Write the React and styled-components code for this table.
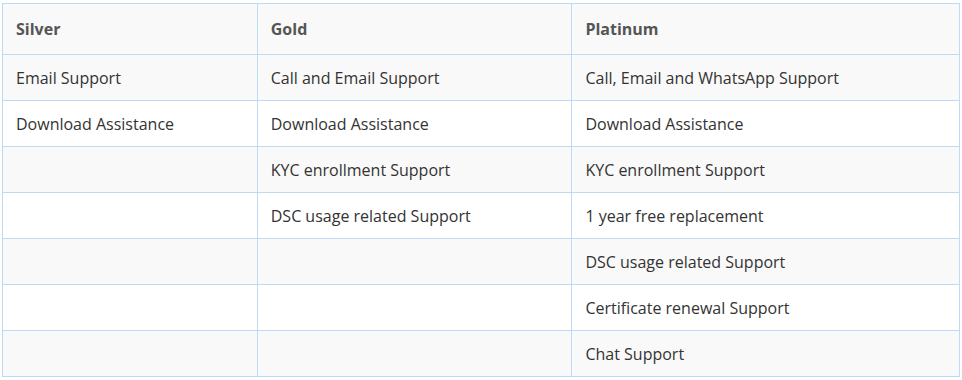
import React from "react";
import styled, { createGlobalStyle } from "styled-components";

const GlobalStyle = createGlobalStyle`
  body {
    margin: 0;
    background: #ffffff;
    font-family: "Open Sans", "Liberation Sans", sans-serif;
    overflow: hidden;
  }
`;

const Wrapper = styled.div`
  padding: 3px 0 0 2px;
  width: 980px;
`;

const Table = styled.table`
  border-collapse: collapse;
  width: 958px;
  font-size: 16px;
  color: #333;
`;

const HeadCell = styled.th`
  text-align: left;
  font-weight: 700;
  color: #555;
  height: 51px;
  padding: 0 13px;
  background: #f9f9f9;
  border: 1px solid #bfdaf7;
  box-sizing: border-box;
`;

const Row = styled.tr`
  background: ${(p) => (p.$striped ? "#f9f9f9" : "#ffffff")};
`;

const Cell = styled.td`
  height: 46px;
  padding: 0 13px;
  border: 1px solid #bfdaf7;
  box-sizing: border-box;
  line-height: 22px;
`;

const columns = ["Silver", "Gold", "Platinum"];

const rows = [
  ["Email Support", "Call and Email Support", "Call, Email and WhatsApp Support"],
  ["Download Assistance", "Download Assistance", "Download Assistance"],
  ["", "KYC enrollment Support", "KYC enrollment Support"],
  ["", "DSC usage related Support", "1 year free replacement"],
  ["", "", "DSC usage related Support"],
  ["", "", "Certificate renewal Support"],
  ["", "", "Chat Support"],
];

const widths = [255, 315, 388];

export default function App() {
  return (
    <Wrapper>
      <GlobalStyle />
      <Table>
        <colgroup>
          {widths.map((w, i) => (
            <col key={i} style={{ width: w }} />
          ))}
        </colgroup>
        <thead>
          <tr>
            {columns.map((c) => (
              <HeadCell key={c}>{c}</HeadCell>
            ))}
          </tr>
        </thead>
        <tbody>
          {rows.map((r, i) => (
            <Row key={i} $striped={i % 2 === 0}>
              {r.map((v, j) => (
                <Cell key={j}>{v}</Cell>
              ))}
            </Row>
          ))}
        </tbody>
      </Table>
    </Wrapper>
  );
}
